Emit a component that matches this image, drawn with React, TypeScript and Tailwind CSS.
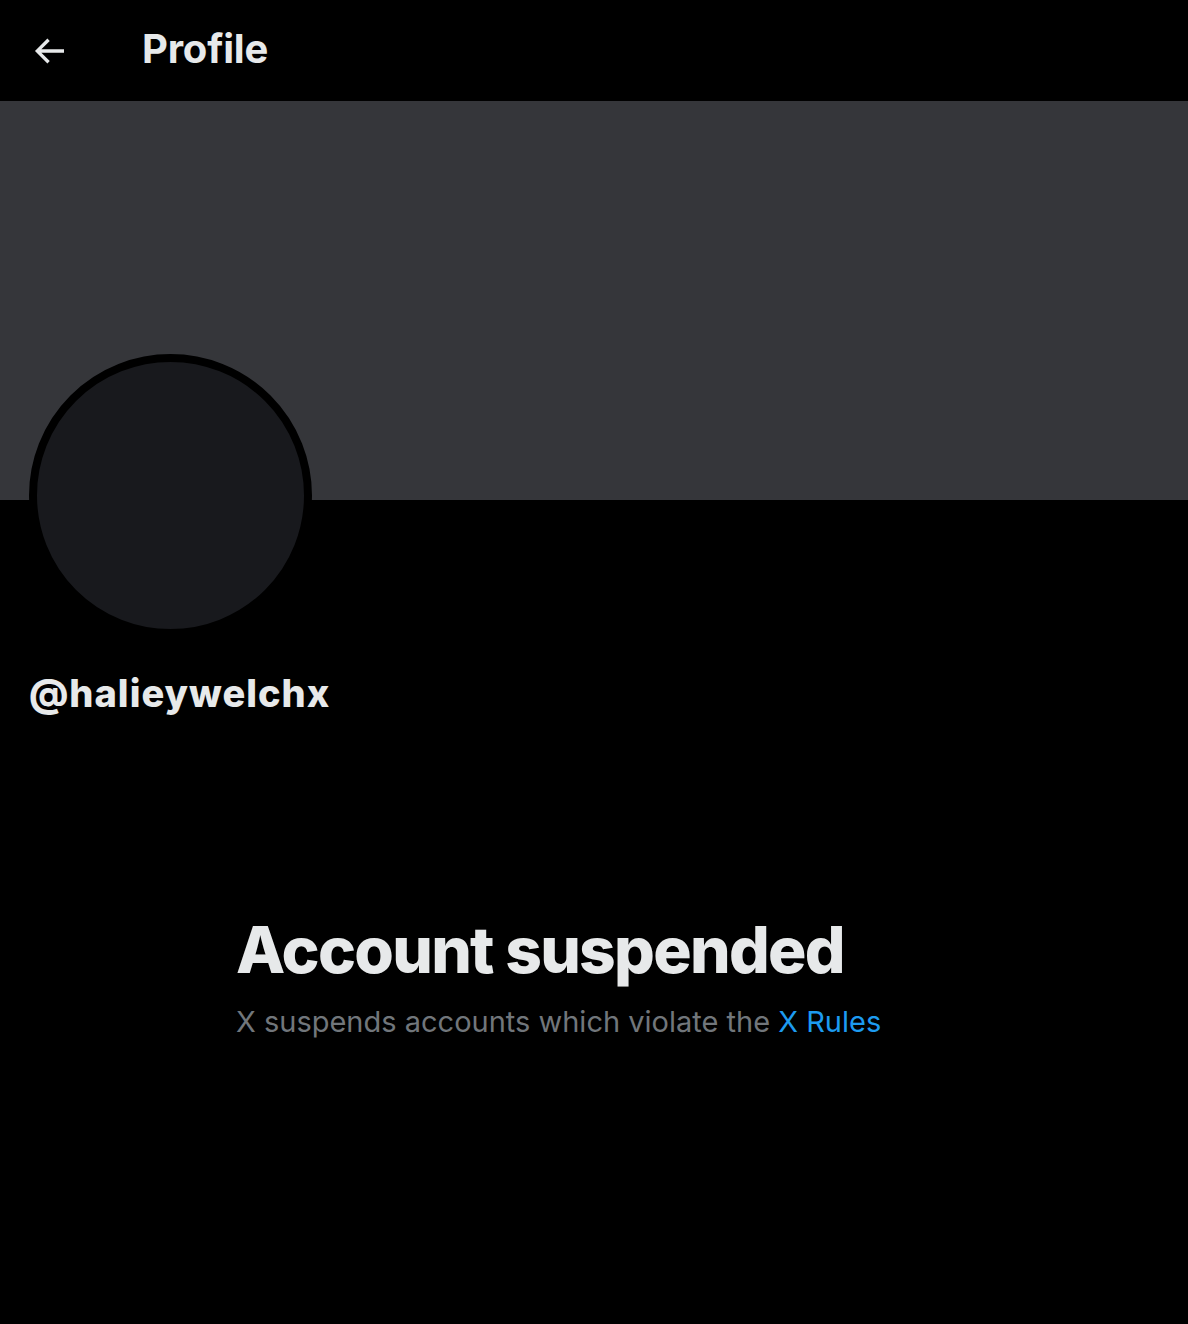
import React from "react";

function BackArrow() {
  return (
    <svg viewBox="0 0 24 24" className="w-[40px] h-[40px]" fill="#e7e9ea">
      <path d="M7.414 13l5.043 5.04-1.414 1.42L3.586 12l7.457-7.46 1.414 1.42L7.414 11H21v2H7.414z" />
    </svg>
  );
}

export default function App() {
  return (
    <div className="w-[1188px] min-h-[1324px] bg-black text-[#e7e9ea]" style={{ fontFamily: "Inter, 'Noto Sans', sans-serif" }}>
      {/* Header */}
      <div className="h-[101px] flex items-center">
        <div className="pl-[29px] w-[142px] flex items-center">
          <BackArrow />
        </div>
        <h1 className="text-[40px] font-bold tracking-[-0.2px] leading-none pb-[4px]">Profile</h1>
      </div>

      {/* Banner */}
      <div className="h-[399px] bg-[#35363a]" />

      {/* Avatar + handle */}
      <div className="pl-[29px]">
        <div className="w-[283px] h-[283px] -mt-[146px] rounded-full border-[8px] border-black bg-[#18191d]" />
        <p className="mt-[32px] text-[38px] font-extrabold leading-[48px] tracking-[1px]">@halieywelchx</p>
      </div>

      {/* Suspended notice */}
      <div className="pl-[236px] mt-[195px]">
        <h2 className="text-[64px] font-extrabold leading-[76px] tracking-[-1.7px]">Account suspended</h2>
        <p className="mt-[14px] text-[29px] leading-[40px] text-[#71767b]">
          X suspends accounts which violate the <span className="text-[#1d9bf0]">X Rules</span>
        </p>
      </div>
    </div>
  );
}
